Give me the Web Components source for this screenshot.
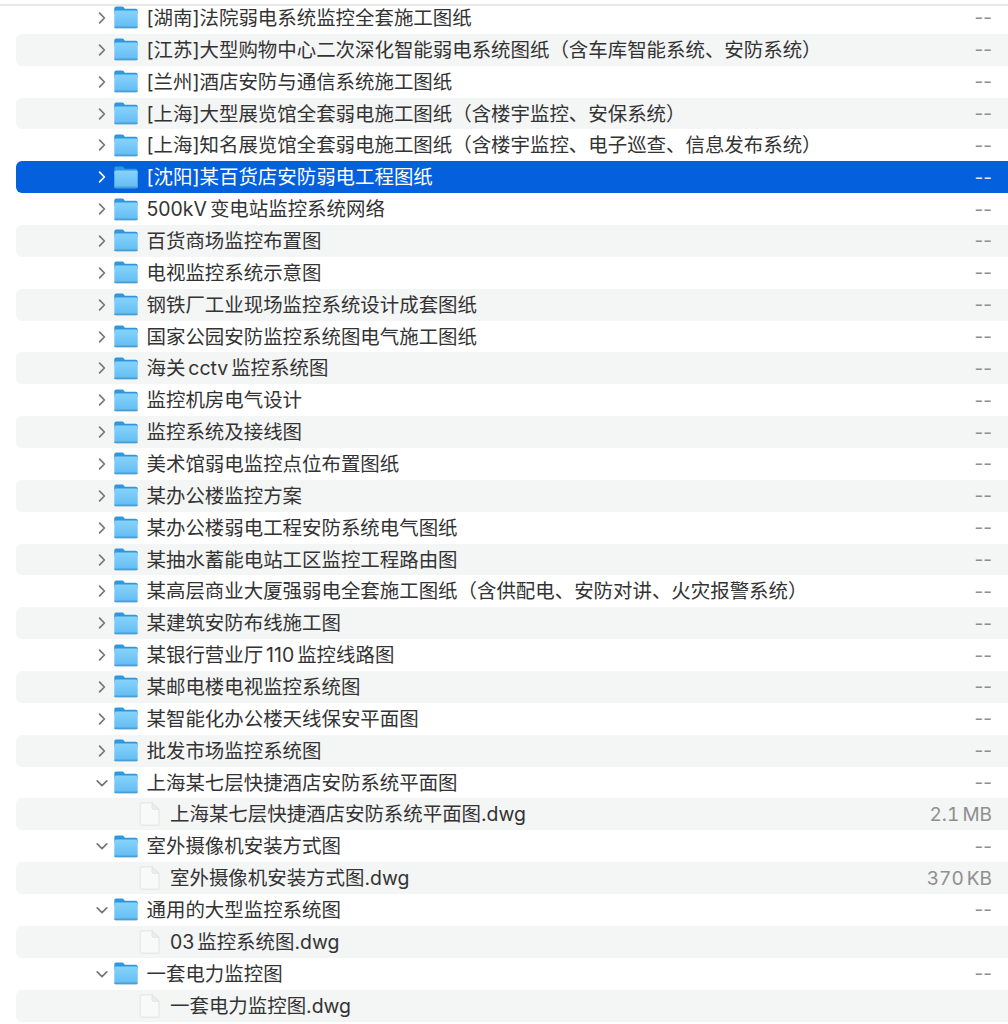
<!DOCTYPE html>
<html>
<head>
<meta charset="utf-8">
<style>
  html, body { margin: 0; padding: 0; background: #fff; }
  body { font-family: "Inter", "Noto Sans CJK SC", "Liberation Sans", sans-serif; overflow: hidden; height: 1024px; }
</style>
</head>
<body>
<file-list></file-list>
<script>
const FOLDER_SVG = `<svg width="24" height="23" viewBox="0 0 24 23">
  <defs><linearGradient id="fg" x1="0" y1="0" x2="0" y2="1"><stop offset="0" stop-color="#86d3fb"/><stop offset="1" stop-color="#62bcf3"/></linearGradient></defs>
  <path d="M.3 6V2.6C.3 1.3 1.1.6 2.2.6H8.2C9 .6 9.4.9 9.9 1.5L10.8 2.8H21.6C22.9 2.8 23.7 3.6 23.7 4.8V8H.3Z" fill="#2f97de"/>
  <rect x=".3" y="4.6" width="23.4" height="17.6" rx="1.7" fill="url(#fg)"/>
  <rect x=".3" y="20.4" width="23.4" height="1.8" rx=".9" fill="#4c9ed4"/>
</svg>`;
const DOC_SVG = `<svg width="21" height="24" viewBox="0 0 21 24">
  <path d="M1.2 1.8C1.2 1.2 1.6.8 2.2.8H13L20 7.4V22C20 22.7 19.6 23.2 19 23.2H2.2C1.6 23.2 1.2 22.7 1.2 22Z" fill="#f9f9f9" stroke="#dedede" stroke-width=".8"/>
  <path d="M13 .8V6.4C13 7 13.4 7.4 14 7.4H20Z" fill="#ececec" stroke="#dcdcdc" stroke-width=".6"/>
</svg>`;

class ListRow extends HTMLElement {
  connectedCallback() {
    const kind = this.getAttribute('kind') || 'folder';
    const open = this.hasAttribute('open');
    const size = this.getAttribute('size') || '';
    const root = this.attachShadow({mode: 'open'});
    const chevron = kind == 'file' ? '' : (open
      ? '<svg width="14" height="14" viewBox="0 0 14 14"><path d="M2.2 4.8L7 9.6L11.8 4.8" fill="none" stroke="currentColor" stroke-width="1.7" stroke-linecap="round" stroke-linejoin="round"/></svg>'
      : '<svg width="14" height="14" viewBox="0 0 14 14"><path d="M4.6 2.2L9.4 7L4.6 11.8" fill="none" stroke="currentColor" stroke-width="1.7" stroke-linecap="round" stroke-linejoin="round"/></svg>');
    root.innerHTML = `
      <style>
        :host { display: block; height: 31.87px; }
        .row { display: flex; align-items: center; height: 100%; color: #333; }
        :host([striped]) .row { background: #f4f5f5; border-radius: 6px 0 0 6px; }
        :host([selected]) .row { background: #0460dc; border-radius: 6px 0 0 6px; color: #fff; }
        .chev { width: 14px; height: 14px; margin-left: 79px; color: #767676; display: flex; }
        :host([selected]) .chev { color: #fff; }
        .icon { margin-left: 5px; width: 24px; height: 23px; display: flex; }
        .doc { margin-left: 123px; width: 21px; height: 24px; display: flex; }
        .name { margin-left: 8.5px; font-size: 19.45px; line-height: 30px; white-space: nowrap; flex: 1; word-spacing: -2.5px; }
        .doc + .name { margin-left: 10px; }
        .size { margin-right: 16px; font-size: 19px; color: #8f8f8f; white-space: nowrap; word-spacing: -2px; }
        :host([kind="file"]) .size { font-feature-settings: "tnum"; }
        :host([selected]) .size { color: #dfe9fa; }
      </style>
      <div class="row">
        ${kind == 'file' ? `<span class="doc">${DOC_SVG}</span>` : `<span class="chev">${chevron}</span><span class="icon">${FOLDER_SVG}</span>`}
        <span class="name"><slot></slot></span>
        <span class="size">${size}</span>
      </div>`;
  }
}
customElements.define('list-row', ListRow);

const ROWS = [
  ['[湖南]法院弱电系统监控全套施工图纸'],
  ['[江苏]大型购物中心二次深化智能弱电系统图纸（含车库智能系统、安防系统）'],
  ['[兰州]酒店安防与通信系统施工图纸'],
  ['[上海]大型展览馆全套弱电施工图纸（含楼宇监控、安保系统）'],
  ['[上海]知名展览馆全套弱电施工图纸（含楼宇监控、电子巡查、信息发布系统）'],
  ['[沈阳]某百货店安防弱电工程图纸', 'selected'],
  ['500kV 变电站监控系统网络'],
  ['百货商场监控布置图'],
  ['电视监控系统示意图'],
  ['钢铁厂工业现场监控系统设计成套图纸'],
  ['国家公园安防监控系统图电气施工图纸'],
  ['海关 cctv 监控系统图'],
  ['监控机房电气设计'],
  ['监控系统及接线图'],
  ['美术馆弱电监控点位布置图纸'],
  ['某办公楼监控方案'],
  ['某办公楼弱电工程安防系统电气图纸'],
  ['某抽水蓄能电站工区监控工程路由图'],
  ['某高层商业大厦强弱电全套施工图纸（含供配电、安防对讲、火灾报警系统）'],
  ['某建筑安防布线施工图'],
  ['某银行营业厅 110 监控线路图'],
  ['某邮电楼电视监控系统图'],
  ['某智能化办公楼天线保安平面图'],
  ['批发市场监控系统图'],
  ['上海某七层快捷酒店安防系统平面图', 'open'],
  ['上海某七层快捷酒店安防系统平面图.dwg', 'file', '2.1 MB'],
  ['室外摄像机安装方式图', 'open'],
  ['室外摄像机安装方式图.dwg', 'file', '370 KB'],
  ['通用的大型监控系统图', 'open'],
  ['03 监控系统图.dwg', 'file', ''],
  ['一套电力监控图', 'open'],
  ['一套电力监控图.dwg', 'file', ''],
];

class FileList extends HTMLElement {
  connectedCallback() {
    const root = this.attachShadow({mode: 'open'});
    root.innerHTML = `
      <style>
        :host { display: block; }
        .top { height: 6px; background: linear-gradient(#fff 4px, #e8e8e8 4px, #e8e8e8 6px); }
        .rows { padding-left: 16px; margin-top: -4px; }
      </style>
      <div class="top"></div>
      <div class="rows"></div>`;
    const box = root.querySelector('.rows');
    ROWS.forEach((r, i) => {
      const el = document.createElement('list-row');
      el.textContent = r[0];
      if (r[1] == 'selected') el.setAttribute('selected', '');
      else if (i % 2 == 1) el.setAttribute('striped', '');
      if (r[1] == 'open') el.setAttribute('open', '');
      if (r[1] == 'file') {
        el.setAttribute('kind', 'file');
        el.setAttribute('size', r[2]);
      } else {
        el.setAttribute('size', '--');
      }
      box.appendChild(el);
    });
  }
}
customElements.define('file-list', FileList);
</script>
</body>
</html>
